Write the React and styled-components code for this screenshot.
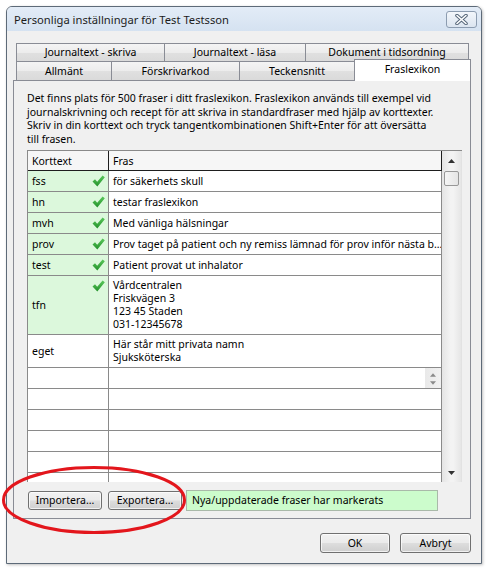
import React from 'react'
import styled, { createGlobalStyle } from 'styled-components'

const GlobalStyle = createGlobalStyle`
  html, body {
    margin: 0;
    padding: 0;
    background: #fff;
  }
  body {
    font-family: "Noto Sans", "Open Sans", sans-serif;
    font-size: 10.5px;
    color: #000;
  }
  * {
    box-sizing: border-box;
  }
`

const Page = styled.div`
  position: relative;
  width: 488px;
  height: 570px;
  padding: 6px 0 0 6px;
`

const Window = styled.div`
  width: 476px;
  height: 558px;
  border: 1px solid #5d6a78;
  border-radius: 6px 6px 0 0;
  background: #f0f0f0;
  display: flex;
  flex-direction: column;
  overflow: hidden;
  box-shadow: 1px 1px 3px rgba(0, 0, 0, 0.25);
`

const TitleBar = styled.div`
  flex: none;
  height: 24px;
  display: flex;
  align-items: center;
  justify-content: space-between;
  padding: 0 4px 0 7px;
  background: linear-gradient(#e3ecf7, #d5e2f1);
  font-size: 11.2px;
  color: #1c1c1c;
`

const CloseButton = styled.div`
  width: 31px;
  height: 17px;
  display: flex;
  align-items: center;
  justify-content: center;
  border: 1px solid #8c9cb0;
  border-radius: 3px;
  background: linear-gradient(#f2f6fb, #dce5f0);
`

const Client = styled.div`
  flex: 1;
  display: flex;
  flex-direction: column;
  padding: 12px 10px 10px 6px;
`

const TabStrip = styled.div`
  position: relative;
  z-index: 2;
  padding-left: 3px;
`

const TabRow = styled.div`
  display: flex;
  align-items: flex-end;
  height: ${p => p.$h}px;
`

const Tab = styled.div`
  flex: none;
  width: ${p => p.$w}px;
  height: ${p => (p.$active ? 22 : p.$h)}px;
  margin-left: ${p => (p.$first ? 0 : -1)}px;
  margin-bottom: ${p => (p.$active ? -1 : 0)}px;
  display: flex;
  align-items: center;
  justify-content: center;
  padding-bottom: ${p => (p.$active ? 3 : 1)}px;
  border: 1px solid #898c95;
  border-bottom: none;
  background: ${p =>
    p.$active
      ? '#fff'
      : 'linear-gradient(#f4f4f4, #ececec 50%, #e0e0e0 51%, #dadada)'};
  white-space: nowrap;
`

const Panel = styled.div`
  flex: none;
  height: 439px;
  display: flex;
  flex-direction: column;
  padding: 11px 8px 8px 13px;
  border: 1px solid #898c95;
  background: #f0f0f0;
`

const Description = styled.p`
  margin: 0;
  height: 54px;
  line-height: 13.5px;
`

const Grid = styled.div`
  margin-top: 4px;
  height: 332px;
  width: 435px;
  display: flex;
  border-top: 1px solid #8a8a8a;
  border-left: 1px solid #8a8a8a;
`

const GridBody = styled.div`
  width: 414px;
  overflow: hidden;
  background: #fff;
`

const Row = styled.div`
  display: grid;
  grid-template-columns: 81px 333px;
  height: ${p => p.$h}px;
`

const HeadCell = styled.div`
  display: flex;
  align-items: center;
  padding-left: 4px;
  background: #f6f6f6;
  border-right: 1px solid #1e1e1e;
  border-bottom: 1px solid #1e1e1e;
`

const KeyCell = styled.div`
  display: flex;
  justify-content: space-between;
  padding-left: 4px;
  padding-right: 3px;
  background: ${p => (p.$marked ? '#dcf8dc' : '#fff')};
  border-right: 1px solid #8a8a8a;
  border-bottom: 1px solid #8a8a8a;
`

const KeyText = styled.span`
  align-self: center;
`

const Check = styled.svg`
  flex: none;
  margin-top: 4px;
`

const TextCell = styled.div`
  position: relative;
  display: flex;
  flex-direction: column;
  justify-content: ${p => (p.$top ? 'flex-start' : 'center')};
  padding: ${p => (p.$top ? '3px 4px 0 4px' : '0 4px')};
  line-height: 13px;
  border-right: 1px solid #8a8a8a;
  border-bottom: 1px solid #8a8a8a;
  white-space: nowrap;
  overflow: hidden;
  text-overflow: ellipsis;
`

const Spinner = styled.div`
  position: absolute;
  top: 0;
  right: 0;
  bottom: 0;
  width: 16px;
  display: flex;
  flex-direction: column;
  align-items: center;
  justify-content: space-between;
  padding: 5px 0 3px;
  background: linear-gradient(to right, #e9e9e9, #f1f1f1);
`

const Scrollbar = styled.div`
  width: 20px;
  display: flex;
  flex-direction: column;
  border-right: 1px solid #e2e2e2;
  background: linear-gradient(to right, #e4e4e4, #f3f3f3 45%, #f3f3f3 60%, #e6e6e6);
`

const ScrollButton = styled.div`
  flex: none;
  height: ${p => p.$h}px;
  display: flex;
  align-items: center;
  justify-content: center;
`

const Thumb = styled.div`
  flex: none;
  height: 15px;
  margin: 1px 2px 0 2px;
  border: 1px solid #979797;
  border-radius: 2px;
  background: linear-gradient(to right, #f5f5f5, #e4e4e4);
`

const Track = styled.div`
  flex: 1;
`

const BottomRow = styled.div`
  margin-top: 8px;
  height: 20px;
  display: flex;
  align-items: center;
  padding-left: 1px;
`

const Button = styled.div`
  flex: none;
  width: ${p => p.$w}px;
  height: ${p => p.$h || 19}px;
  margin-left: ${p => p.$gap || 0}px;
  display: flex;
  align-items: center;
  justify-content: center;
  border: 1px solid #707070;
  border-radius: 3px;
  background: linear-gradient(#f2f2f2, #ebebeb 48%, #dddddd 52%, #cfcfcf);
  box-shadow: inset 0 0 0 1px rgba(255, 255, 255, 0.7);
  white-space: nowrap;
`

const Notice = styled.div`
  margin-left: 4px;
  width: 252px;
  height: 21px;
  display: flex;
  align-items: center;
  padding-left: 5px;
  background: #ccfccc;
  border: 1px solid #a9b9a9;
  white-space: nowrap;
`

const DialogButtons = styled.div`
  margin-top: 14px;
  display: flex;
  justify-content: flex-end;
`

const Annotation = styled.svg`
  position: absolute;
  left: 1px;
  top: 465px;
  pointer-events: none;
`

const upperTabs = [
  { label: 'Journaltext - skriva', w: 149 },
  { label: 'Journaltext - läsa', w: 142 },
  { label: 'Dokument i tidsordning', w: 164 },
]

const lowerTabs = [
  { label: 'Allmänt', w: 96 },
  { label: 'Förskrivarkod', w: 129 },
  { label: 'Teckensnitt', w: 116 },
  { label: 'Fraslexikon', w: 117, active: true },
]

const phrases = [
  { key: 'fss', lines: ['för säkerhets skull'], marked: true },
  { key: 'hn', lines: ['testar fraslexikon'], marked: true },
  { key: 'mvh', lines: ['Med vänliga hälsningar'], marked: true },
  {
    key: 'prov',
    lines: ['Prov taget på patient och ny remiss lämnad för prov inför nästa b…'],
    marked: true,
  },
  { key: 'test', lines: ['Patient provat ut inhalator'], marked: true },
  {
    key: 'tfn',
    lines: ['Vårdcentralen', 'Friskvägen 3', '123 45 Staden', '031-12345678'],
    marked: true,
    h: 59,
  },
  { key: 'eget', lines: ['Här står mitt privata namn', 'Sjuksköterska'], h: 33 },
  { key: '', lines: [], spinner: true },
  { key: '', lines: [] },
  { key: '', lines: [] },
  { key: '', lines: [] },
  { key: '', lines: [] },
  { key: '', lines: [] },
]

const CloseIcon = () => (
  <svg width="13" height="11" viewBox="0 0 13 11">
    <path d="M2 1.5 L11 9.5 M11 1.5 L2 9.5" stroke="#56677a" strokeWidth="3.6" strokeLinecap="round" />
    <path d="M2 1.5 L11 9.5 M11 1.5 L2 9.5" stroke="#fff" strokeWidth="1.6" strokeLinecap="round" />
  </svg>
)

const CheckMark = () => (
  <Check width="13" height="12" viewBox="0 0 13 12">
    <defs>
      <linearGradient id="ck" x1="0" y1="0" x2="0" y2="1">
        <stop offset="0" stopColor="#5cc95c" />
        <stop offset="1" stopColor="#22912a" />
      </linearGradient>
    </defs>
    <path d="M0.5 6.5 L3 4.3 L5.2 6.8 L10.6 0.4 L12.8 2.3 L5.3 11.5 Z" fill="url(#ck)" />
  </Check>
)

const Arrow = ({ down, w = 7, color = '#333' }) => (
  <svg width={w} height="4" viewBox="0 0 7 4">
    <path d={down ? 'M0 0 L7 0 L3.5 4 Z' : 'M0 4 L7 4 L3.5 0 Z'} fill={color} />
  </svg>
)

export default function App() {
  return (
    <Page>
      <GlobalStyle />
      <Window>
        <TitleBar>
          <span>Personliga inställningar för Test Testsson</span>
          <CloseButton>
            <CloseIcon />
          </CloseButton>
        </TitleBar>
        <Client>
          <TabStrip>
            <TabRow $h={18}>
              {upperTabs.map((t, i) => (
                <Tab key={t.label} $w={t.w} $h={18} $first={i === 0}>
                  {t.label}
                </Tab>
              ))}
            </TabRow>
            <TabRow $h={19}>
              {lowerTabs.map((t, i) => (
                <Tab key={t.label} $w={t.w} $h={19} $first={i === 0} $active={t.active}>
                  {t.label}
                </Tab>
              ))}
            </TabRow>
          </TabStrip>
          <Panel>
            <Description>
              Det finns plats för 500 fraser i ditt fraslexikon. Fraslexikon används till exempel vid
              <br />
              journalskrivning och recept för att skriva in standardfraser med hjälp av korttexter.
              <br />
              Skriv in din korttext och tryck tangentkombinationen Shift+Enter för att översätta
              <br />
              till frasen.
            </Description>
            <Grid>
              <GridBody>
                <Row $h={20}>
                  <HeadCell>Korttext</HeadCell>
                  <HeadCell>Fras</HeadCell>
                </Row>
                {phrases.map((p, i) => (
                  <Row key={i} $h={p.h || 21}>
                    <KeyCell $marked={p.marked}>
                      <KeyText>{p.key}</KeyText>
                      {p.marked && <CheckMark />}
                    </KeyCell>
                    <TextCell $top={p.lines.length > 1}>
                      {p.lines.map(l => (
                        <span key={l}>{l}</span>
                      ))}
                      {p.spinner && (
                        <Spinner>
                          <Arrow w={6} color="#8a8a8a" />
                          <Arrow w={6} color="#8a8a8a" down />
                        </Spinner>
                      )}
                    </TextCell>
                  </Row>
                ))}
              </GridBody>
              <Scrollbar>
                <ScrollButton $h={19}>
                  <Arrow />
                </ScrollButton>
                <Thumb />
                <Track />
                <ScrollButton $h={18}>
                  <Arrow down />
                </ScrollButton>
              </Scrollbar>
            </Grid>
            <BottomRow>
              <Button $w={74}>Importera...</Button>
              <Button $w={74} $gap={6}>Exportera...</Button>
              <Notice>Nya/uppdaterade fraser har markerats</Notice>
            </BottomRow>
          </Panel>
          <DialogButtons>
            <Button $w={70} $h={20}>OK</Button>
            <Button $w={71} $h={20} $gap={10}>Avbryt</Button>
          </DialogButtons>
        </Client>
      </Window>
      <Annotation width="188" height="72" viewBox="0 0 188 72">
        <ellipse cx="93" cy="35" rx="90.5" ry="32.5" fill="none" stroke="#e3161c" strokeWidth="3" />
      </Annotation>
    </Page>
  )
}
